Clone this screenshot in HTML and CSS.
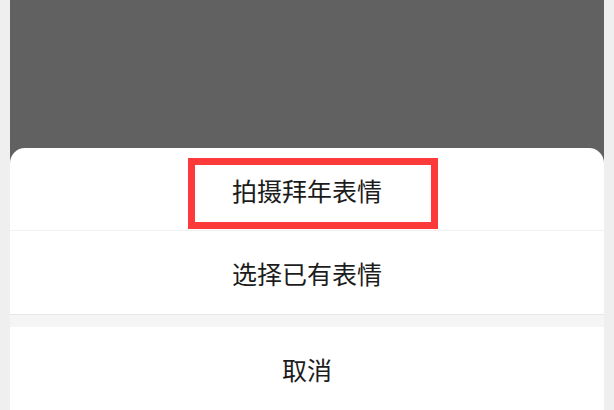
FILE: index.html
```html
<!DOCTYPE html>
<html lang="zh">
<head>
<meta charset="utf-8">
<link rel="stylesheet" href="styles.css">
</head>
<body>
<div class="screen">
  <div class="sheet">
    <div class="item first">拍摄拜年表情<div class="mark"></div></div>
    <div class="item second">选择已有表情</div>
    <div class="gap"></div>
    <div class="item cancel">取消</div>
  </div>
</div>
</body>
</html>
```
FILE: styles.css
```css
html, body {
  margin: 0;
  padding: 0;
  background: #efefef;
  width: 614px;
  height: 410px;
  overflow: hidden;
}
.screen {
  margin: 0 10px;
  width: 594px;
  height: 410px;
  background: #616161;
  display: flex;
  flex-direction: column;
  justify-content: flex-end;
}
.sheet {
  background: #fff;
  border-radius: 15px 15px 0 0;
  display: flex;
  flex-direction: column;
  position: relative;
}
.item {
  display: flex;
  align-items: center;
  justify-content: center;
  font-family: "Noto Sans CJK SC", "Noto Sans", sans-serif;
  font-size: 25px;
  color: #1c1c1c;
  position: relative;
}
.first {
  height: 83px;
  border-bottom: 1px solid #f1f1f1;
  padding-top: 1px;
  box-sizing: border-box;
}
.second {
  height: 84px;
  border-bottom: 1px solid #e6e6e6;
  padding-top: 1px;
  box-sizing: border-box;
}
.gap {
  height: 12px;
  background: #f5f5f5;
}
.cancel {
  height: 83px;
  padding-top: 0;
  box-sizing: border-box;
}
.mark {
  position: absolute;
  left: 178px;
  top: 10px;
  width: 250px;
  height: 71px;
  box-sizing: border-box;
  border: 7px solid #fc3a3a;
}
```
